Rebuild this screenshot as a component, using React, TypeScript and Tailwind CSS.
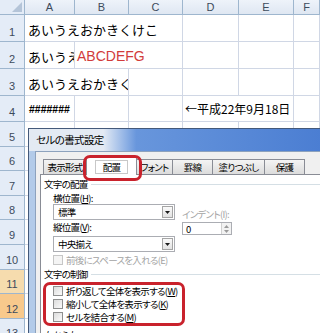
import React from "react"

const jp = "font-['Noto_Sans_CJK_JP',sans-serif]"
const ui = "font-['Noto_Sans_CJK_JP',sans-serif] [font-feature-settings:'palt'] text-[9.5px] tracking-[-0.7px] leading-[12px] text-black"
const grid = "border-r border-b border-[#d0d7e5]"

const RowHead: React.FC<{ n: number; h: string; bg?: string }> = ({ n, h, bg }) => (
  <div
    className={`flex w-[25px] shrink-0 items-end justify-center border-r border-b border-[#9eb6ce] pb-[3px] font-['Liberation_Sans',sans-serif] text-[11px] leading-none text-[#3d4b5c] ${h} ${bg ?? "bg-[#e4ecf7]"}`}>
    {n}
  </div>
)

const EmptyCells: React.FC = () => (
  <>
    <div className={`w-[50px] shrink-0 ${grid}`} />
    <div className={`w-[54px] shrink-0 ${grid}`} />
    <div className={`w-[54px] shrink-0 ${grid}`} />
    <div className={`w-[56px] shrink-0 ${grid}`} />
    <div className={`w-[55px] shrink-0 ${grid}`} />
    <div className={`w-[26px] shrink-0 ${grid}`} />
  </>
)

const Sheet: React.FC = () => (
  <div className="flex flex-col bg-white">
    {/* column headers */}
    <div className="flex h-[15px] font-['Liberation_Sans',sans-serif] text-[11px] leading-none text-[#3d4b5c]">
      <div className="relative w-[25px] shrink-0 border-r border-b border-[#9eb6ce] bg-[#e4ecf7]">
        <svg className="absolute right-[2px] bottom-[2px]" width="10" height="10" viewBox="0 0 10 10">
          <path d="M10 0 L10 10 L0 10 Z" fill="#b4c4d8" />
        </svg>
      </div>
      <div className="flex w-[50px] shrink-0 items-center justify-center border-r border-b border-[#9eb6ce] bg-linear-to-b from-[#eef3fa] to-[#dfe7f2]">A</div>
      <div className="flex w-[54px] shrink-0 items-center justify-center border-r border-b border-[#9eb6ce] bg-linear-to-b from-[#eef3fa] to-[#dfe7f2]">B</div>
      <div className="flex w-[54px] shrink-0 items-center justify-center border-r border-b border-[#9eb6ce] bg-linear-to-b from-[#eef3fa] to-[#dfe7f2]">C</div>
      <div className="flex w-[56px] shrink-0 items-center justify-center border-r border-b border-[#9eb6ce] bg-linear-to-b from-[#eef3fa] to-[#dfe7f2]">D</div>
      <div className="flex w-[55px] shrink-0 items-center justify-center border-r border-b border-[#9eb6ce] bg-linear-to-b from-[#eef3fa] to-[#dfe7f2]">E</div>
      <div className="flex w-[26px] shrink-0 items-center justify-center border-r border-b border-[#9eb6ce] bg-linear-to-b from-[#eef3fa] to-[#dfe7f2]">F</div>
    </div>

    {/* row 1 */}
    <div className="flex h-[27px]">
      <RowHead n={1} h="h-[27px]" />
      <div className={`flex w-[158px] shrink-0 items-end border-b border-r border-[#d0d7e5] pb-[3px] pl-[3px] whitespace-nowrap ${jp} text-[13px] leading-[17px] text-black`}>
        あいうえおかきくけこ
      </div>
      <div className={`w-[56px] shrink-0 ${grid}`} />
      <div className={`w-[55px] shrink-0 ${grid}`} />
      <div className={`w-[26px] shrink-0 ${grid}`} />
    </div>

    {/* row 2 */}
    <div className="flex h-[27px]">
      <RowHead n={2} h="h-[27px]" />
      <div className={`flex w-[50px] shrink-0 items-end overflow-hidden pb-[3px] pl-[3px] whitespace-nowrap ${grid} ${jp} text-[13px] leading-[17px] text-black`}>
        あいうえおかきくけこ
      </div>
      <div className={`flex w-[108px] shrink-0 items-end border-b border-r border-[#d0d7e5] pb-[4px] pl-[2px] whitespace-nowrap font-['Liberation_Sans',sans-serif] text-[14px] leading-[16px] text-[#d23b3b]`}>
        ABCDEFG
      </div>
      <div className={`w-[56px] shrink-0 ${grid}`} />
      <div className={`w-[55px] shrink-0 ${grid}`} />
      <div className={`w-[26px] shrink-0 ${grid}`} />
    </div>

    {/* row 3 */}
    <div className="flex h-[27px]">
      <RowHead n={3} h="h-[27px]" />
      <div className={`flex w-[104px] shrink-0 items-end overflow-hidden pb-[3px] pl-[3px] whitespace-nowrap ${grid} ${jp} text-[13px] leading-[17px] text-black`}>
        あいうえおかきくけこ
      </div>
      <div className={`w-[54px] shrink-0 ${grid}`} />
      <div className={`w-[56px] shrink-0 ${grid}`} />
      <div className={`w-[55px] shrink-0 ${grid}`} />
      <div className={`w-[26px] shrink-0 ${grid}`} />
    </div>

    {/* row 4 */}
    <div className="flex h-[26px]">
      <RowHead n={4} h="h-[26px]" />
      <div className={`flex w-[50px] shrink-0 items-end pb-[7px] pl-[4px] font-['Liberation_Sans',sans-serif] text-[10.5px] leading-none font-bold text-black ${grid}`}>
        #######
      </div>
      <div className={`w-[54px] shrink-0 ${grid}`} />
      <div className={`w-[54px] shrink-0 ${grid}`} />
      <div className={`flex w-[111px] shrink-0 items-end border-b border-r border-[#d0d7e5] pb-[5px] pl-[2px] whitespace-nowrap ${jp} text-[12px] leading-[15px] text-black`}>
        ←平成22年9月18日
      </div>
      <div className={`w-[26px] shrink-0 ${grid}`} />
    </div>

    {[5, 6, 7, 8, 9, 10, 11, 12, 13].map((n) => (
      <div key={n} className="flex h-[24.6px]">
        <RowHead
          n={n}
          h="h-[24.6px]"
          bg={n === 11 ? "bg-[#f6dcae]" : n === 12 ? "bg-[#f8c98c]" : undefined}
        />
        <EmptyCells />
      </div>
    ))}
  </div>
)

const CheckBox: React.FC<{ disabled?: boolean }> = ({ disabled }) => (
  <div
    className={`h-[10px] w-[10px] shrink-0 border ${
      disabled ? "border-[#c6c6c6] bg-[#f4f4f4]" : "border-[#8e8f8f] bg-linear-to-br from-[#dcdcdc] to-[#fbfbfb]"
    }`}
  />
)

const Tab: React.FC<{ label: string; w: string }> = ({ label, w }) => (
  <div
    className={`flex h-[15px] shrink-0 items-center justify-center border-t border-r border-[#898c95] bg-linear-to-b from-[#f4f4f4] to-[#dcdcdc] ${w}`}>
    {label}
  </div>
)

const DropArrow: React.FC = () => (
  <div className="mr-px flex h-[12px] w-[11px] items-center justify-center border border-[#a5a5a5] bg-linear-to-b from-[#fafafa] to-[#e2e2e2]">
    <svg width="5" height="3" viewBox="0 0 5 3">
      <path d="M0 0 H5 L2.5 3 Z" fill="#1a1a1a" />
    </svg>
  </div>
)

const Dialog: React.FC = () => (
  <div className={`absolute top-[128px] left-[28px] flex h-[215px] w-[300px] flex-col border border-[#44597a] bg-[#b3cbe9] ${ui}`}>
    {/* title bar */}
    <div className="flex h-[22px] shrink-0 items-center bg-linear-to-r from-[#e3eaf3] from-[25%] via-[#6896dc] via-[36%] to-[#4a7dd2] pl-[7px]">
      <span className="text-[10.5px] tracking-[-0.6px]">セルの書式設定</span>
    </div>

    {/* client area */}
    <div className="ml-[6px] flex flex-1 flex-col border-t border-l border-[#8da2bd] bg-[#f0f0f0] pt-[5px] pl-[4px]">
      {/* tabs */}
      <div className="flex h-[17px] items-end pl-[3px]">
        <div className="flex h-[15px] w-[44px] shrink-0 items-center justify-center border-t border-r border-l border-[#898c95] bg-linear-to-b from-[#f4f4f4] to-[#dcdcdc]">
          表示形式
        </div>
        <div className="relative z-10 -mb-px flex h-[18px] w-[50px] shrink-0 items-center justify-center border-t border-r border-[#898c95] bg-white">
          <span className="border border-[#c8c8c8] px-[7px] leading-[12px]">配置</span>
          <div className="absolute -top-[3px] -right-[6px] -bottom-[6px] -left-[4px] rounded-[7px] border-[3px] border-[#c9222c]" />
        </div>
        <Tab label="フォント" w="w-[36px]" />
        <Tab label="罫線" w="w-[40px]" />
        <Tab label="塗りつぶし" w="w-[52px]" />
        <Tab label="保護" w="w-[40px]" />
      </div>

      {/* page */}
      <div className="flex flex-1 flex-col border-t border-l border-[#898c95] bg-white pl-[3px]">
        <div className="mt-[3px] flex h-[12px] items-center gap-[3px]">
          <span>文字の配置</span>
          <div className="h-px flex-1 bg-[#d5dfe5]" />
        </div>

        <div className="flex">
          <div className="ml-[9px] flex w-[122px] flex-col">
            <div className="mt-[2px] h-[12px]">
              横位置(<span className="underline">H</span>):
            </div>
            <div className="flex h-[16px] items-center border border-[#abadb3] bg-white pl-[4px]">
              <span className="flex-1">標準</span>
              <DropArrow />
            </div>
            <div className="mt-[1px] h-[12px]">
              縦位置(<span className="underline">V</span>):
            </div>
            <div className="mt-[3px] flex h-[16px] items-center border border-[#abadb3] bg-white pl-[4px]">
              <span className="flex-1">中央揃え</span>
              <DropArrow />
            </div>
            <div className="mt-[2px] flex h-[12px] items-center gap-[3px] text-[#a3a3a3]">
              <CheckBox disabled />
              <span className="whitespace-nowrap">前後にスペースを入れる(E)</span>
            </div>
          </div>

          <div className="ml-[7px] flex flex-col">
            <div className="mt-[18px] h-[12px] whitespace-nowrap text-[#a3a3a3]">インデント(I):</div>
            <div className="mt-[2px] flex h-[13px] w-[50px] items-center border border-[#abadb3] bg-white pl-[3px]">
              <span className="flex-1">0</span>
              <div className="flex h-[11px] w-[10px] flex-col items-center justify-center gap-[2px] border-l border-[#d0d0d0] bg-[#f2f2f2]">
                <svg width="5" height="3" viewBox="0 0 5 3">
                  <path d="M0 3 H5 L2.5 0 Z" fill="#9a9a9a" />
                </svg>
                <svg width="5" height="3" viewBox="0 0 5 3">
                  <path d="M0 0 H5 L2.5 3 Z" fill="#9a9a9a" />
                </svg>
              </div>
            </div>
          </div>
        </div>

        <div className="mt-[2px] flex h-[12px] items-center gap-[3px]">
          <span>文字の制御</span>
          <div className="h-px flex-1 bg-[#d5dfe5]" />
        </div>

        <div className="mt-[2px] -ml-px flex h-[44px] w-[142px] flex-col gap-[1px] rounded-[7px] border-[3px] border-[#c9222c] pl-[7px]">
          <div className="flex h-[12px] items-center gap-[3px] whitespace-nowrap">
            <CheckBox />
            <span>
              折り返して全体を表示する(<span className="underline">W</span>)
            </span>
          </div>
          <div className="flex h-[12px] items-center gap-[3px] whitespace-nowrap">
            <CheckBox />
            <span>
              縮小して全体を表示する(<span className="underline">K</span>)
            </span>
          </div>
          <div className="flex h-[12px] items-center gap-[3px] whitespace-nowrap">
            <CheckBox />
            <span>
              セルを結合する(<span className="underline">M</span>)
            </span>
          </div>
        </div>

        <div className="mt-[3px] flex h-[12px] items-center gap-[3px]">
          <span>右から左</span>
          <div className="h-px flex-1 bg-[#d5dfe5]" />
        </div>
      </div>
    </div>
  </div>
)

const App: React.FC = () => {
  return (
    <div className="relative h-[333px] w-[320px] overflow-hidden bg-white">
      <Sheet />
      <Dialog />
    </div>
  )
}

export default App
